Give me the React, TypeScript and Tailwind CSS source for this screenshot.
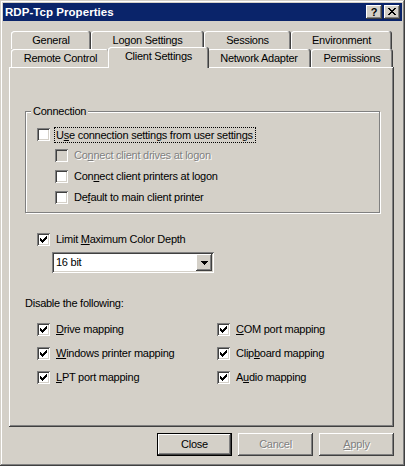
import React from "react";

const RAISED =
  "shadow-[inset_-1px_-1px_0_#404040,inset_1px_1px_0_#ffffff,inset_-2px_-2px_0_#808080,inset_2px_2px_0_#d4d0c8]";
const SUNKEN =
  "shadow-[inset_1px_1px_0_#808080,inset_-1px_-1px_0_#ffffff,inset_2px_2px_0_#404040,inset_-2px_-2px_0_#d4d0c8]";
const DISABLED = "text-[#808080] [text-shadow:1px_1px_0_#ffffff]";

function CheckMark() {
  const rows: [number, number][][] = [
    [[6, 1]],
    [[5, 2]],
    [[0, 1], [4, 3]],
    [[0, 2], [3, 3]],
    [[0, 5]],
    [[1, 3]],
    [[2, 1]],
  ];
  return (
    <svg width="13" height="13" className="absolute left-0 top-0" shapeRendering="crispEdges">
      {rows.map((segs, r) =>
        segs.map(([x, w], i) => (
          <rect key={`${r}-${i}`} x={3 + x} y={3 + r} width={w} height={1} fill="#000" />
        ))
      )}
    </svg>
  );
}

function Box({ checked = false, disabled = false }: { checked?: boolean; disabled?: boolean }) {
  return (
    <div
      className={`relative w-[13px] h-[13px] shrink-0 ${SUNKEN} ${disabled ? "bg-[#d4d0c8]" : "bg-white"}`}
    >
      {checked && <CheckMark />}
    </div>
  );
}

function Label({ children, disabled = false }: { children: React.ReactNode; disabled?: boolean }) {
  return <span className={`whitespace-nowrap ${disabled ? DISABLED : "text-black"}`}>{children}</span>;
}

function Row({
  checked = false,
  disabled = false,
  h = "h-[21px]",
  focus = false,
  children,
}: {
  checked?: boolean;
  disabled?: boolean;
  h?: string;
  focus?: boolean;
  children: React.ReactNode;
}) {
  return (
    <div className={`flex items-center ${h}`}>
      <Box checked={checked} disabled={disabled} />
      {focus ? (
        <span className="ml-[4px] border border-dotted border-black pl-[1px] pr-[2px] leading-[14px]">
          <Label disabled={disabled}>{children}</Label>
        </span>
      ) : (
        <span className="ml-[6px]">
          <Label disabled={disabled}>{children}</Label>
        </span>
      )}
    </div>
  );
}

const TAB_SHADOW =
  "shadow-[inset_-1px_0_0_#404040,inset_1px_1px_0_#ffffff,inset_-2px_0_0_#808080]";

function Tab({ w, label, selected = false }: { w: string; label: string; selected?: boolean }) {
  return (
    <div
      className={`${w} flex items-center justify-center rounded-t-[3px] bg-[#d4d0c8] ${TAB_SHADOW} ${
        selected ? "relative z-10 h-[21px] -mt-[2px] -mx-[2px] pb-[3px]" : "h-[18px] pt-[1px]"
      }`}
    >
      <span className="whitespace-nowrap">{label}</span>
    </div>
  );
}

function Btn({ label, def = false, disabled = false, u }: { label: string; def?: boolean; disabled?: boolean; u?: number }) {
  const text =
    u === undefined ? (
      label
    ) : (
      <>
        {label.slice(0, u)}
        <span className="underline">{label[u]}</span>
        {label.slice(u + 1)}
      </>
    );
  if (def) {
    return (
      <div className="w-[75px] h-[23px] border border-black">
        <div className={`w-full h-full flex items-center justify-center ${RAISED}`}>
          <span className="text-black">{text}</span>
        </div>
      </div>
    );
  }
  return (
    <div className={`w-[75px] h-[23px] flex items-center justify-center ${RAISED}`}>
      <span className={disabled ? DISABLED : "text-black"}>{text}</span>
    </div>
  );
}

function U({ children }: { children: React.ReactNode }) {
  return <span className="underline">{children}</span>;
}

export default function App() {
  return (
    <div
      className={`w-[405px] h-[466px] bg-[#d4d0c8] overflow-hidden font-['Liberation_Sans',Arial,sans-serif] text-[11px] leading-[13px] tracking-[-0.25px] text-black shadow-[inset_-1px_-1px_0_#404040,inset_1px_1px_0_#d4d0c8,inset_-2px_-2px_0_#808080,inset_2px_2px_0_#ffffff] pt-[3px]`}
    >
      {/* Title bar */}
      <div className="mx-[3px] h-[18px] bg-[#0a246a] flex items-center justify-between pl-[2px] pr-[2px]">
        <span className="text-white font-bold text-[11.5px] tracking-[0.05px]">RDP-Tcp Properties</span>
        <div className="flex gap-[2px]">
          <div className={`w-[16px] h-[14px] bg-[#d4d0c8] ${RAISED} flex items-center justify-center`}>
            <span className="font-bold text-[11px] leading-[11px] text-black">?</span>
          </div>
          <div className={`w-[16px] h-[14px] bg-[#d4d0c8] ${RAISED} flex items-center justify-center`}>
            <svg width="8" height="7" shapeRendering="crispEdges" className="-mt-[1px]">
              {[
                [0, 2, 6, 2],
                [1, 2, 5, 2],
                [2, 4],
                [3, 2],
                [2, 4],
                [1, 2, 5, 2],
                [0, 2, 6, 2],
              ].map((r, i) => (
                <g key={i}>
                  <rect x={r[0]} y={i} width={r[1]} height={1} fill="#000" />
                  {r.length > 2 && <rect x={r[2]} y={i} width={r[3]} height={1} fill="#000" />}
                </g>
              ))}
            </svg>
          </div>
        </div>
      </div>

      {/* Tabs */}
      <div className="ml-[11px] mt-[10px]">
        <div className="flex h-[18px]">
          <Tab w="w-[80px]" label="General" />
          <Tab w="w-[113px]" label="Logon Settings" />
          <Tab w="w-[87px]" label="Sessions" />
          <Tab w="w-[101px]" label="Environment" />
        </div>
        <div className="flex h-[18px]">
          <Tab w="w-[99px]" label="Remote Control" />
          <Tab w="w-[101px]" label="Client Settings" selected />
          <Tab w="w-[104px]" label="Network Adapter" />
          <Tab w="w-[82px]" label="Permissions" />
        </div>
      </div>

      {/* Panel */}
      <div
        className={`ml-[9px] w-[385px] h-[360px] shadow-[inset_-1px_-1px_0_#404040,inset_1px_1px_0_#ffffff,inset_-2px_-2px_0_#808080] pt-[44px]`}
      >
        {/* Group box */}
        <div className="relative ml-[16px] w-[355px] h-[102px] border border-[#808080] shadow-[1px_1px_0_#ffffff,inset_1px_1px_0_#ffffff] pt-[12px] pl-[11px]">
          <span className="absolute left-[5px] -top-[7px] px-[2px] bg-[#d4d0c8]">Connection</span>
          <Row focus>
            U<U>s</U>e connection settings from user settings
          </Row>
          <div className="ml-[18px]">
            <Row disabled>
              Co<U>n</U>nect client drives at logon
            </Row>
            <Row>
              Con<U>n</U>ect client printers at logon
            </Row>
            <Row>
              De<U>f</U>ault to main client printer
            </Row>
          </div>
        </div>

        {/* Color depth */}
        <div className="ml-[28px] mt-[16px]">
          <Row checked>
            Limit <U>M</U>aximum Color Depth
          </Row>
        </div>
        <div className={`ml-[43px] mt-[2px] w-[162px] h-[21px] bg-white ${SUNKEN} flex items-center justify-between pl-[4px] pr-[2px]`}>
          <span>16 bit</span>
          <div className={`w-[16px] h-[17px] bg-[#d4d0c8] ${RAISED} flex items-center justify-center`}>
            <svg width="7" height="4" shapeRendering="crispEdges">
              <rect x="0" y="0" width="7" height="1" fill="#000" />
              <rect x="1" y="1" width="5" height="1" fill="#000" />
              <rect x="2" y="2" width="3" height="1" fill="#000" />
              <rect x="3" y="3" width="1" height="1" fill="#000" />
            </svg>
          </div>
        </div>

        {/* Disable */}
        <div className="ml-[16px] mt-[24px] h-[14px]">Disable the following:</div>
        <div className="ml-[28px] mt-[6px] grid grid-cols-[180px_1fr]">
          <Row checked h="h-[24px]">
            <U>D</U>rive mapping
          </Row>
          <Row checked h="h-[24px]">
            <U>C</U>OM port mapping
          </Row>
          <Row checked h="h-[24px]">
            <U>W</U>indows printer mapping
          </Row>
          <Row checked h="h-[24px]">
            Clip<U>b</U>oard mapping
          </Row>
          <Row checked h="h-[25px]">
            <U>L</U>PT port mapping
          </Row>
          <Row checked h="h-[25px]">
            A<U>u</U>dio mapping
          </Row>
        </div>
      </div>

      {/* Buttons */}
      <div className="mt-[6px] flex justify-end gap-[6px] pr-[11px]">
        <Btn label="Close" def />
        <Btn label="Cancel" disabled />
        <Btn label="Apply" disabled u={0} />
      </div>
    </div>
  );
}
